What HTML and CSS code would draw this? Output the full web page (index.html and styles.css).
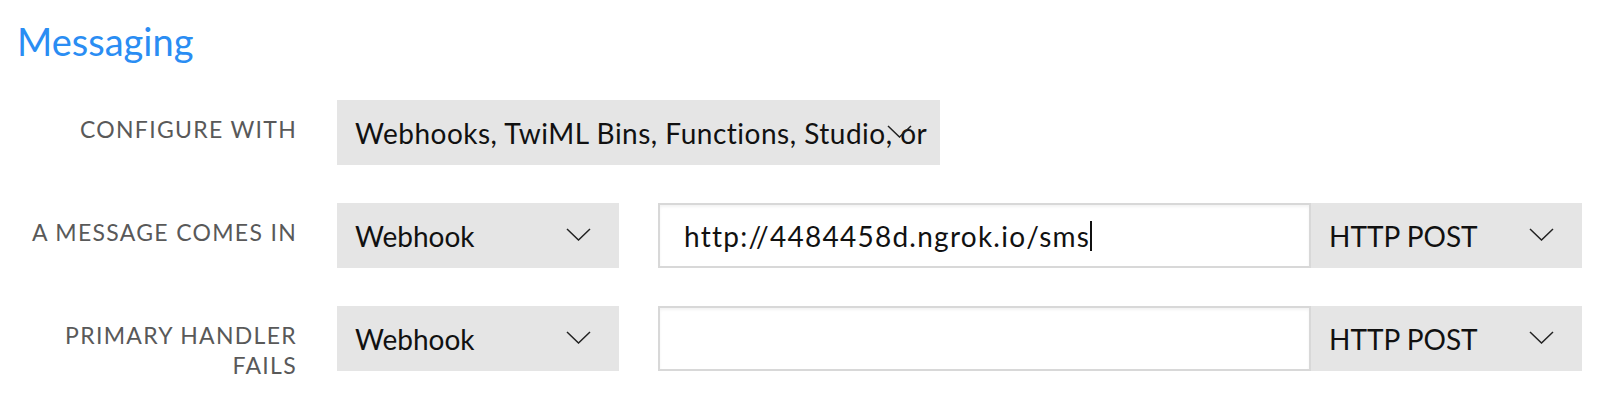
FILE: index.html
```html
<!DOCTYPE html>
<html lang="en">
<head>
    <meta charset="UTF-8">
    <meta name="viewport" content="width=device-width, initial-scale=1.0">
    <title>Messaging</title>
    <link rel="stylesheet" href="styles.css">
</head>
<body>
    <section class="messaging">
        <h2 class="section-title">Messaging</h2>

        <div class="form-row">
            <div class="form-label">CONFIGURE WITH</div>
            <div class="form-fields">
                <div class="select select-wide">
                    <span class="select-text">Webhooks, TwiML Bins, Functions, Studio, or</span>
                    <svg class="chevron" width="25" height="13" viewBox="0 0 25 13"><polyline points="1,1 12.5,12 24,1" /></svg>
                </div>
            </div>
        </div>

        <div class="form-row">
            <div class="form-label">A MESSAGE COMES IN</div>
            <div class="form-fields">
                <div class="select select-type">
                    <span class="select-text">Webhook</span>
                    <svg class="chevron" width="25" height="13" viewBox="0 0 25 13"><polyline points="1,1 12.5,12 24,1" /></svg>
                </div>
                <div class="url-group">
                    <div class="text-input"><span class="url">http://4484458d.ngrok.io/sms</span><span class="caret"></span></div>
                    <div class="select select-method">
                        <span class="select-text">HTTP POST</span>
                        <svg class="chevron" width="25" height="13" viewBox="0 0 25 13"><polyline points="1,1 12.5,12 24,1" /></svg>
                    </div>
                </div>
            </div>
        </div>

        <div class="form-row">
            <div class="form-label">PRIMARY HANDLER<br>FAILS</div>
            <div class="form-fields">
                <div class="select select-type">
                    <span class="select-text">Webhook</span>
                    <svg class="chevron" width="25" height="13" viewBox="0 0 25 13"><polyline points="1,1 12.5,12 24,1" /></svg>
                </div>
                <div class="url-group">
                    <div class="text-input"></div>
                    <div class="select select-method">
                        <span class="select-text">HTTP POST</span>
                        <svg class="chevron" width="25" height="13" viewBox="0 0 25 13"><polyline points="1,1 12.5,12 24,1" /></svg>
                    </div>
                </div>
            </div>
        </div>
    </section>
</body>
</html>
```

FILE: styles.css
```css
body {
    margin: 0;
    background-color: white;
    font-family: Lato, "Open Sans", sans-serif;
    color: #111;
}
.messaging {
    padding: 0 18px 0 17px;
}
.section-title {
    margin: 0;
    padding-top: 17px;
    height: 100px;
    box-sizing: border-box;
    font-size: 38px;
    font-weight: normal;
    line-height: 48px;
    color: #2a8df3;
}
.form-row {
    display: flex;
    gap: 40px;
    margin-bottom: 38px;
}
.form-row:last-child {
    margin-bottom: 0;
}
.form-label {
    width: 280px;
    padding-top: 14px;
    text-align: right;
    font-size: 23px;
    line-height: 30px;
    letter-spacing: 1.3px;
    color: #595959;
}
.form-fields {
    display: flex;
    gap: 39px;
}
.select {
    position: relative;
    height: 65px;
    box-sizing: border-box;
    padding: 0 9px 0 18px;
    background-color: #e5e5e5;
    display: flex;
    align-items: center;
}
.select-text {
    font-size: 28px;
    white-space: nowrap;
}
.select-wide {
    width: 603px;
}
.select-wide .select-text {
    letter-spacing: 0.5px;
}
.select-type {
    width: 282px;
}
.select-method {
    width: 271px;
}
.chevron {
    position: absolute;
    right: 28px;
    top: 25px;
}
.chevron polyline {
    fill: none;
    stroke: #222;
    stroke-width: 1.5;
}
.url-group {
    display: flex;
}
.text-input {
    width: 653px;
    height: 65px;
    box-sizing: border-box;
    padding: 0 24px;
    border: 2px solid #d8d8d8;
    box-shadow: inset 0 2px 3px rgba(0, 0, 0, 0.05);
    background-color: white;
    display: flex;
    align-items: center;
    font-size: 28px;
}
.url {
    letter-spacing: 1.25px;
}
.caret {
    display: inline-block;
    width: 2px;
    height: 30px;
    background-color: #111;
}
```
